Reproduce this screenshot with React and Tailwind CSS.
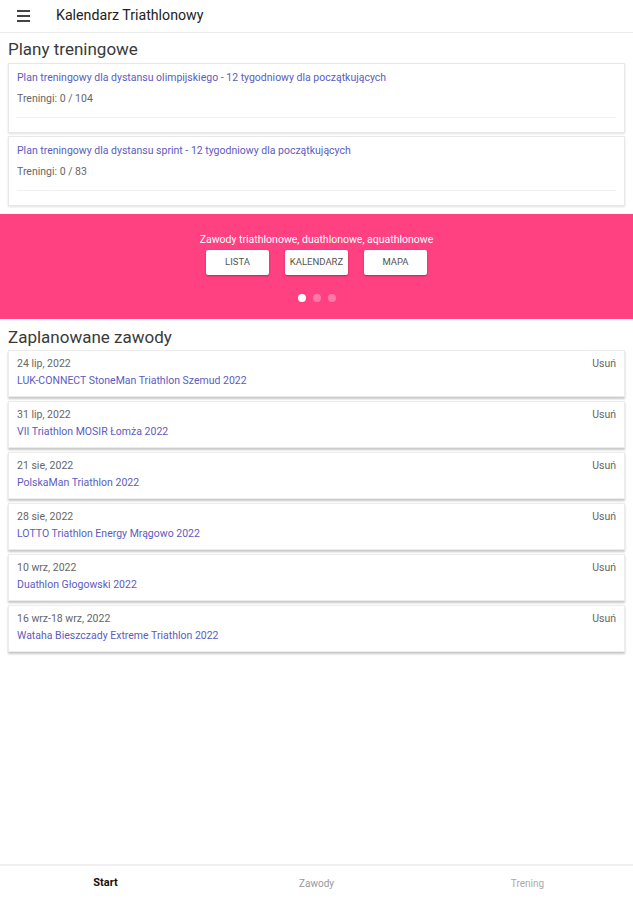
import React from 'react';

const plans = [
  { title: 'Plan treningowy dla dystansu olimpijskiego - 12 tygodniowy dla początkujących', count: '0 / 104' },
  { title: 'Plan treningowy dla dystansu sprint - 12 tygodniowy dla początkujących', count: '0 / 83' },
];

const events = [
  { date: '24 lip, 2022', name: 'LUK-CONNECT StoneMan Triathlon Szemud 2022' },
  { date: '31 lip, 2022', name: 'VII Triathlon MOSIR Łomża 2022' },
  { date: '21 sie, 2022', name: 'PolskaMan Triathlon 2022' },
  { date: '28 sie, 2022', name: 'LOTTO Triathlon Energy Mrągowo 2022' },
  { date: '10 wrz, 2022', name: 'Duathlon Głogowski 2022' },
  { date: '16 wrz-18 wrz, 2022', name: 'Wataha Bieszczady Extreme Triathlon 2022' },
];

const App = () => {
  return (
    <div className="flex h-[900px] flex-col bg-white font-['Roboto',sans-serif] text-[#333]">
      {/* Top bar */}
      <header className="flex h-[33px] shrink-0 items-center border-b border-[#ececec]">
        <div className="ml-[17px] flex w-[13px] flex-col gap-[3px]">
          <span className="h-[2px] bg-[#444]" />
          <span className="h-[2px] bg-[#444]" />
          <span className="h-[2px] bg-[#444]" />
        </div>
        <span className="ml-[26px] text-[14.2px] text-[#222]">Kalendarz Triathlonowy</span>
      </header>

      {/* Training plans */}
      <h2 className="mt-[4px] px-2 text-[17px] leading-[24px] text-[#3a3a3a]">Plany treningowe</h2>
      <div className="mt-[2px] flex flex-col gap-[3px] px-2">
        {plans.map((p) => (
          <div
            key={p.title}
            className="border border-[#e8e8e8] bg-white px-2 pt-[7px] pb-[14px] shadow-[0_1px_2px_rgba(0,0,0,0.12)]"
          >
            <div className="text-[10.5px] leading-[14px] text-[#5c5cbf]">{p.title}</div>
            <div className="mt-[7px] text-[10.5px] leading-[14px] text-[#666]">Treningi: {p.count}</div>
            <div className="mt-[11px] h-px bg-[#f0f0f0]" />
          </div>
        ))}
      </div>

      {/* Pink banner */}
      <div className="mt-2 flex h-[105px] shrink-0 flex-col items-center bg-[#ff4081] pt-[19px]">
        <div className="text-[10.5px] leading-[14px] text-white">Zawody triathlonowe, duathlonowe, aquathlonowe</div>
        <div className="mt-[3px] flex gap-4">
          {['LISTA', 'KALENDARZ', 'MAPA'].map((b) => (
            <button
              key={b}
              className="flex h-[25px] w-[63px] items-center justify-center rounded-[2px] bg-white text-[9.5px] text-[#555] shadow-[0_1px_2px_rgba(0,0,0,0.3)]"
            >
              {b}
            </button>
          ))}
        </div>
        <div className="mt-[19px] flex gap-[7px]">
          <span className="h-2 w-2 rounded-full bg-white" />
          <span className="h-2 w-2 rounded-full bg-white/30" />
          <span className="h-2 w-2 rounded-full bg-white/30" />
        </div>
      </div>

      {/* Planned events */}
      <h2 className="mt-[6px] px-2 text-[17px] leading-[24px] text-[#3a3a3a]">Zaplanowane zawody</h2>
      <div className="mt-[1px] flex flex-col gap-[4px] px-2">
        {events.map((e) => (
          <div
            key={e.name}
            className="flex h-[47px] justify-between border border-[#ececec] bg-white px-2 pt-[6px] shadow-[0_2px_2px_rgba(0,0,0,0.22)]"
          >
            <div>
              <div className="text-[10.5px] leading-[14px] text-[#666]">{e.date}</div>
              <div className="mt-[3px] text-[10.5px] leading-[14px] text-[#5c5cbf]">{e.name}</div>
            </div>
            <div className="text-[10.5px] leading-[14px] text-[#666]">Usuń</div>
          </div>
        ))}
      </div>

      <div className="flex-1" />

      {/* Bottom navigation */}
      <nav className="grid h-[36px] shrink-0 grid-cols-3 items-center border-t-2 border-[#efefef] text-center text-[10px]">
        <span className="text-[11px] font-bold text-[#111]">Start</span>
        <span className="text-[#999]">Zawody</span>
        <span className="text-[#aaa]">Trening</span>
      </nav>
    </div>
  );
};

export default App;
